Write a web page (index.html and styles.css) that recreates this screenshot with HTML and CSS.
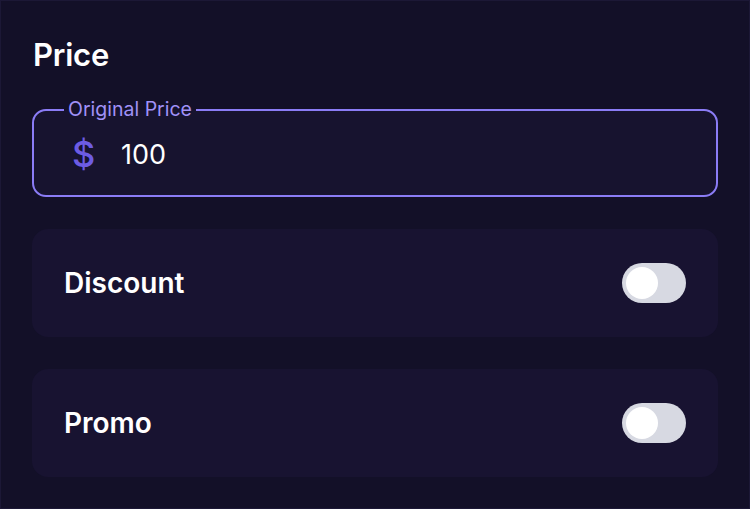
FILE: index.html
```html
<!DOCTYPE html>
<html>
<head>
<meta charset="utf-8">
<link rel="stylesheet" href="styles.css">
</head>
<body>
<div class="panel">
  <h2 class="title">Price</h2>
  <div class="field">
    <span class="legend">Original Price</span>
    <span class="currency">$</span>
    <span class="value">100</span>
  </div>
  <div class="card">
    <span class="card-label">Discount</span>
    <span class="toggle"><span class="knob"></span></span>
  </div>
  <div class="card">
    <span class="card-label">Promo</span>
    <span class="toggle"><span class="knob"></span></span>
  </div>
</div>
</body>
</html>
```

FILE: styles.css
```css
html, body {
  margin: 0;
  padding: 0;
  background: #131028;
}
body {
  font-family: Inter, "Noto Sans", sans-serif;
  color: #ffffff;
}
.panel {
  box-sizing: border-box;
  width: 750px;
  height: 509px;
  padding: 36px 31px 0 31px;
  border: 1px solid #1c1836;
  display: flex;
  flex-direction: column;
}
.title {
  margin: 0 0 0 1px;
  font-size: 31px;
  font-weight: 600;
  line-height: 36px;
  letter-spacing: -0.2px;
}
.field {
  position: relative;
  flex-shrink: 0;
  margin-top: 36px;
  height: 88px;
  box-sizing: border-box;
  border: 2px solid #8b7cf6;
  border-radius: 14px;
  background: #17132f;
  display: flex;
  align-items: center;
  padding: 2px 0 0 38px;
}
.legend {
  position: absolute;
  top: -13px;
  left: 30px;
  padding: 0 4px;
  font-size: 19.5px;
  line-height: 22px;
  color: #a091f7;
  background: linear-gradient(#131028 0, #131028 12px, #17132f 12px);
}
.currency {
  font-size: 36px;
  line-height: 40px;
  color: #6d5ce3;
  font-weight: 500;
  width: 49px;
}
.value {
  font-size: 27px;
  color: #ffffff;
}
.card {
  flex-shrink: 0;
  margin-top: 32px;
  height: 108px;
  border-radius: 16px;
  background: #181331;
  display: flex;
  align-items: center;
  justify-content: space-between;
  padding: 0 32px 0 32px;
}
.card-label {
  font-size: 28px;
  font-weight: 600;
}
.toggle {
  width: 64px;
  height: 40px;
  border-radius: 20px;
  background: #d7d9e2;
  display: flex;
  align-items: center;
  padding: 0 4px;
  box-sizing: border-box;
}
.knob {
  width: 32px;
  height: 32px;
  border-radius: 50%;
  background: #ffffff;
}
```
